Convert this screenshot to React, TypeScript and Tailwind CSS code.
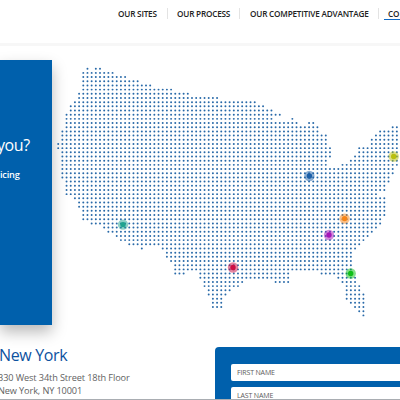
// Each row lists [first, last] column spans of the dotted map.
const PITCH = 4.181;
const ROWS: number[][][] = [
  [[7, 7], [9, 10]],
  [[6, 13]],
  [[6, 16]],
  [[6, 19]],
  [[6, 22]],
  [[6, 27]],
  [[5, 31]],
  [[5, 38]],
  [[4, 47]],
  [[3, 49]],
  [[3, 51]],
  [[2, 53]],
  [[2, 51], [56, 56]],
  [[2, 57], [60, 61]],
  [[2, 62], [80, 81]],
  [[1, 62], [77, 81]],
  [[1, 64], [76, 81]],
  [[1, 64], [75, 81]],
  [[0, 64], [75, 81]],
  [[0, 65], [72, 81]],
  [[1, 65], [72, 81]],
  [[1, 65], [71, 81]],
  [[1, 64], [70, 81]],
  [[1, 64], [68, 81]],
  [[1, 80]],
  [[1, 80]],
  [[1, 79]],
  [[2, 79]],
  [[2, 78]],
  [[2, 78]],
  [[2, 76]],
  [[4, 78]],
  [[5, 78]],
  [[5, 78]],
  [[6, 78]],
  [[6, 78]],
  [[6, 77]],
  [[8, 77]],
  [[11, 76]],
  [[12, 75]],
  [[14, 74]],
  [[15, 73]],
  [[17, 72]],
  [[20, 20], [25, 71]],
  [[26, 70]],
  [[26, 70]],
  [[27, 70]],
  [[28, 70]],
  [[28, 70]],
  [[28, 30], [34, 55], [63, 70]],
  [[34, 55], [67, 71]],
  [[35, 44], [52, 55], [68, 71]],
  [[35, 43], [69, 72]],
  [[36, 41], [69, 72]],
  [[36, 40], [69, 73]],
  [[37, 39], [69, 73]],
  [[37, 39], [70, 73]],
  [[37, 39], [71, 73]],
  [[72, 73]],
  [[73, 73]],
];

const PINS = [
  { x: 393.7, y: 156.5, c: "#b9bf10" },
  { x: 309.4, y: 176, c: "#1c5fa8" },
  { x: 344.6, y: 218.6, c: "#f5851a" },
  { x: 329, y: 235, c: "#a616b8" },
  { x: 350.7, y: 273.5, c: "#10bf18" },
  { x: 233, y: 267.5, c: "#cc0f45" },
  { x: 123, y: 224.6, c: "#1fa38f" },
];

function DottedMap() {
  return (
    <svg className="block h-[265px] w-[348px] shrink-0" viewBox="52 60 348 265">
      <g fill="#2869a8">
        {ROWS.flatMap((spans, r) =>
          spans.flatMap(([a, b]) =>
            Array.from({ length: b - a + 1 }, (_, i) => (
              <circle key={`${r}-${a + i}`} cx={58.2 + (a + i) * PITCH} cy={68.7 + r * PITCH} r={0.98} />
            )),
          ),
        )}
      </g>
      {PINS.map((p) => (
        <g key={p.c} fill={p.c}>
          <circle cx={p.x} cy={p.y} r={5.2} opacity={0.5} />
          <circle cx={p.x} cy={p.y} r={2.7} />
        </g>
      ))}
    </svg>
  );
}

function Divider() {
  return <span className="h-[11px] w-px shrink-0 bg-[#e3e3e3]" />;
}

export default function App() {
  return (
    <div className="relative flex h-[400px] w-[400px] flex-col overflow-hidden bg-white font-['Open_Sans',sans-serif] whitespace-nowrap">
      <header className="flex h-[46px] shrink-0 items-start border-b-3 border-[#f7f7f7] pt-2 pl-[118px] text-[8.2px] leading-[11px] font-semibold tracking-[-0.2px] text-[#222]">
        <span className="w-[49px] shrink-0">OUR SITES</span>
        <Divider />
        <span className="w-[71px] shrink-0 pl-[9px]">OUR PROCESS</span>
        <Divider />
        <span className="w-[138px] shrink-0 pl-[10px]">OUR COMPETITIVE ADVANTAGE</span>
        <Divider />
        <span className="ml-[5px] h-3 w-4 shrink-0 border-b border-[#0f69c4] pl-1">CO</span>
      </header>

      <main className="relative z-10 flex shrink-0 pt-[14px]">
        <section className="flex h-[265px] w-[52px] shrink-0 flex-col items-start bg-[#0060ac] pt-[75px] text-white shadow-[0_7px_14px_rgba(0,0,0,0.28)]">
          <h2 className="-ml-[3px] text-[16px] leading-5 font-medium tracking-[-0.4px]">you?</h2>
          <p className="mt-[14px] text-[9.2px] leading-3 font-semibold tracking-[-0.2px]">icing</p>
        </section>
        <DottedMap />
      </main>

      <div className="flex flex-1 bg-linear-to-b from-white from-75% to-[#ececec]">
        <address className="w-[215px] shrink-0 pt-[20px] text-[9.2px] leading-[12.7px] tracking-[-0.12px] text-[#626262] not-italic">
          <h3 className="-ml-px text-[16px] leading-5 tracking-[-0.35px] text-[#0d529f]">New York</h3>
          <p className="-ml-[2px] mt-[7px]">330 West 34th Street 18th Floor</p>
          <p className="-ml-[2px]">New York, NY 10001</p>
        </address>
        <form className="mt-[22px] flex h-20 flex-1 flex-col gap-[6px] rounded-tl-[4px] bg-[#0060ac] pt-[17px] pl-4 text-[7px] tracking-[-0.15px] text-[#5c5c5c]">
          <div className="flex h-[17px] shrink-0 items-center rounded-l-[2px] bg-white pt-[2px] pl-[6px]">FIRST NAME</div>
          <div className="flex h-[17px] shrink-0 items-center rounded-l-[2px] bg-white pt-[2px] pl-[6px]">LAST NAME</div>
        </form>
      </div>
      <div className="absolute inset-x-0 bottom-0 h-px bg-[#a9adb2]" />
    </div>
  );
}
